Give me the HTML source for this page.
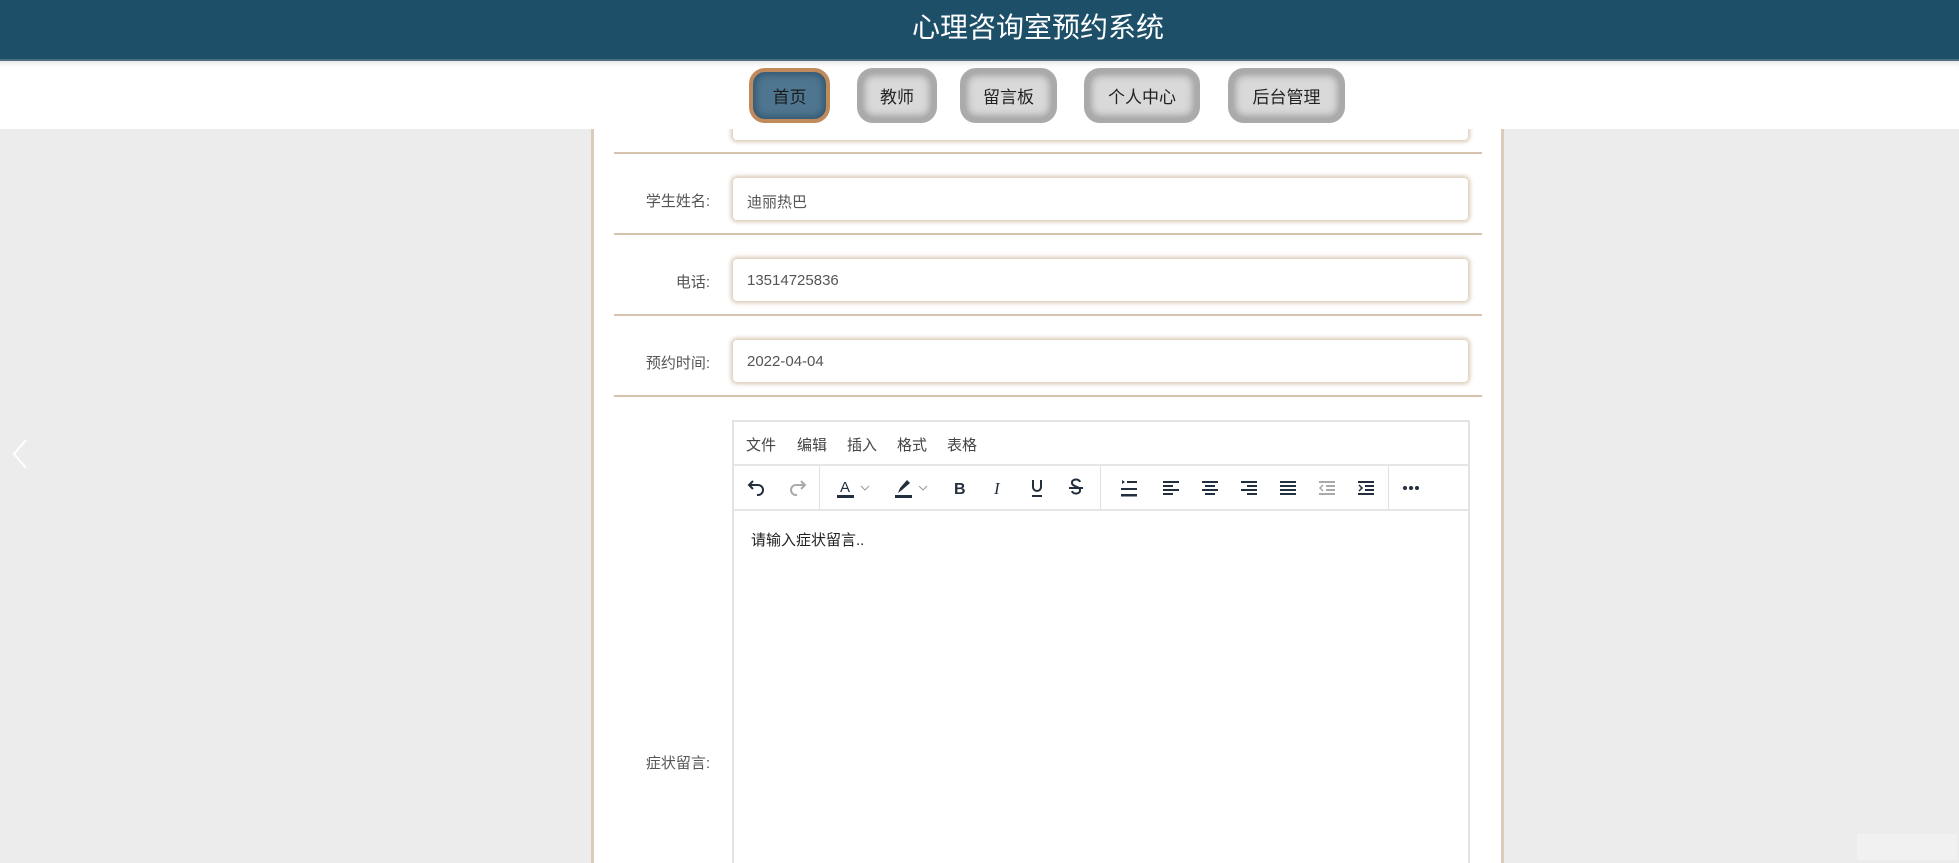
<!DOCTYPE html>
<html><head><meta charset="utf-8"><style>
*{margin:0;padding:0;box-sizing:border-box}
body{width:1959px;height:863px;overflow:hidden;background:#ececec;font-family:"Liberation Sans","Noto Sans CJK SC",sans-serif;position:relative}
.hdr{position:absolute;left:0;top:0;width:1959px;height:61px;background:#1e4f69;border-bottom:2px solid #4c6f82;z-index:3}
.hdr h1{position:absolute;left:912px;top:6px;font-size:28px;font-weight:normal;color:#fff}
.nav{position:absolute;left:0;top:61px;width:1959px;height:68px;background:#fff;box-shadow:inset 0 6px 6px -4px rgba(0,0,0,.12);z-index:2}
.btn{position:absolute;top:7px;height:55px;border-radius:16px;border:4px solid #aaa;background:#d9d9d9;box-shadow:inset 0 0 8px 3px #9b9b9b;font-size:17px;color:#222;display:flex;align-items:center;justify-content:center}
.btn.on{border-color:#c08a5c;background:#4f7690;box-shadow:inset 0 0 8px 2px #2e5168;color:#1b1b1b}
.panel{position:absolute;left:591px;top:129px;width:913px;height:734px;background:#fff;border-left:3px solid #dccbb9;border-right:3px solid #dccbb9;overflow:hidden;z-index:1}
.line{position:absolute;left:20px;width:868px;height:2px;background:#d5c3ad}
.inp{position:absolute;left:138px;width:737px;height:44px;border:1px solid #e4d6c6;border-radius:5px;box-shadow:0 0 4px 1px #d8c6b2;font-size:15px;color:#555;padding:13px 0 0 14px}
.lab{position:absolute;width:116px;left:0;text-align:right;font-size:15px;color:#555}
.ed{position:absolute;left:138px;top:291px;width:738px;height:460px;border:2px solid #e3e3e3}
.menu{height:44px;border-bottom:2px solid #e6e6e6;font-size:15px;color:#444;position:relative}
.menu span{position:absolute;top:12px}
.tb{height:45px;border-bottom:2px solid #e6e6e6;position:relative}
.dv{position:absolute;top:0;width:1px;height:43px;background:#e0e0e0}
.ic{position:absolute;top:10px}
</style></head><body>
<div class="hdr"><h1>心理咨询室预约系统</h1></div>
<div class="nav">
<div class="btn on" style="left:749px;width:81px">首页</div>
<div class="btn" style="left:857px;width:80px">教师</div>
<div class="btn" style="left:960px;width:97px">留言板</div>
<div class="btn" style="left:1084px;width:116px">个人中心</div>
<div class="btn" style="left:1228px;width:117px">后台管理</div>
</div>
<div class="panel">
<div class="inp" style="top:-30px;height:42px"></div>
<div class="line" style="top:23px"></div>
<div class="lab" style="top:61px">学生姓名:</div>
<div class="inp" style="top:48px">迪丽热巴</div>
<div class="line" style="top:104px"></div>
<div class="lab" style="top:142px">电话:</div>
<div class="inp" style="top:129px">13514725836</div>
<div class="line" style="top:185px"></div>
<div class="lab" style="top:223px">预约时间:</div>
<div class="inp" style="top:210px">2022-04-04</div>
<div class="line" style="top:266px"></div>
<div class="lab" style="top:623px">症状留言:</div>
<div class="ed">
<div class="menu"><span style="left:12px">文件</span><span style="left:63px">编辑</span><span style="left:113px">插入</span><span style="left:163px">格式</span><span style="left:213px">表格</span></div>
<div class="tb">
<div class="dv" style="left:85px"></div><div class="dv" style="left:366px"></div><div class="dv" style="left:654px"></div>
<svg class="ic" style="left:11px" width="24" height="24" viewBox="0 0 24 24" fill="none" stroke="#222f3e" stroke-width="2"><path d="M8 5L4 9l4 4M4 9h9a5 5 0 0 1 0 10h-1"/></svg>
<svg class="ic" style="left:51px" width="24" height="24" viewBox="0 0 24 24" fill="none" stroke="#aaa" stroke-width="2"><path d="M16 5l4 4-4 4M20 9h-9a5 5 0 0 0 0 10h1"/></svg>
<svg class="ic" style="left:100px" width="24" height="24" viewBox="0 0 24 24"><text x="6" y="16" font-size="15" font-family="Liberation Sans" fill="#222f3e">A</text><rect x="3" y="19" width="17" height="3" fill="#222f3e"/></svg>
<svg class="ic" style="left:124px" width="14" height="24" viewBox="0 0 14 24" fill="none" stroke="#999"><path d="M3 10l4 4 4-4"/></svg>
<svg class="ic" style="left:158px" width="24" height="24" viewBox="0 0 24 24"><path d="M6 17l2-5 7-8 3 3-8 7z" fill="#222f3e"/><rect x="3" y="19" width="17" height="3" fill="#222f3e"/></svg>
<svg class="ic" style="left:182px" width="14" height="24" viewBox="0 0 14 24" fill="none" stroke="#999"><path d="M3 10l4 4 4-4"/></svg>
<svg class="ic" style="left:214px" width="24" height="24" viewBox="0 0 24 24"><text x="6" y="18" font-size="16" font-weight="bold" font-family="Liberation Sans" fill="#222f3e">B</text></svg>
<svg class="ic" style="left:253px" width="24" height="24" viewBox="0 0 24 24"><text x="7" y="18" font-size="17" font-style="italic" font-family="Liberation Serif" fill="#222f3e">I</text></svg>
<svg class="ic" style="left:291px" width="24" height="24" viewBox="0 0 24 24" fill="none" stroke="#222f3e" stroke-width="2"><path d="M8 4v7a4 4 0 0 0 8 0V4M7 20h10"/></svg>
<svg class="ic" style="left:330px" width="24" height="24" viewBox="0 0 24 24" fill="none" stroke="#222f3e" stroke-width="2"><path d="M16 6a4 3 0 0 0-8 1c0 4 8 3 8 7a4 3 0 0 1-8 1M5 12h14"/></svg>
<svg class="ic" style="left:383px" width="24" height="24" viewBox="0 0 24 24" fill="#222f3e"><path d="M5 4l3 2-3 2z"/><rect x="10" y="5" width="10" height="2"/><rect x="4" y="12" width="16" height="2"/><rect x="4" y="18" width="16" height="2.5"/></svg>
<svg class="ic" style="left:425px" width="24" height="24" viewBox="0 0 24 24" fill="#222f3e"><rect x="4" y="5" width="16" height="2"/><rect x="4" y="9" width="10" height="2"/><rect x="4" y="13" width="16" height="2"/><rect x="4" y="17" width="10" height="2"/></svg>
<svg class="ic" style="left:464px" width="24" height="24" viewBox="0 0 24 24" fill="#222f3e"><rect x="4" y="5" width="16" height="2"/><rect x="7" y="9" width="10" height="2"/><rect x="4" y="13" width="16" height="2"/><rect x="7" y="17" width="10" height="2"/></svg>
<svg class="ic" style="left:503px" width="24" height="24" viewBox="0 0 24 24" fill="#222f3e"><rect x="4" y="5" width="16" height="2"/><rect x="10" y="9" width="10" height="2"/><rect x="4" y="13" width="16" height="2"/><rect x="10" y="17" width="10" height="2"/></svg>
<svg class="ic" style="left:542px" width="24" height="24" viewBox="0 0 24 24" fill="#222f3e"><rect x="4" y="5" width="16" height="2"/><rect x="4" y="9" width="16" height="2"/><rect x="4" y="13" width="16" height="2"/><rect x="4" y="17" width="16" height="2"/></svg>
<svg class="ic" style="left:581px" width="24" height="24" viewBox="0 0 24 24" fill="#aaa"><rect x="4" y="5" width="16" height="2"/><rect x="11" y="9" width="9" height="2"/><rect x="11" y="13" width="9" height="2"/><rect x="4" y="17" width="16" height="2"/><path d="M8 9l-3 3 3 3" fill="none" stroke="#aaa" stroke-width="1.5"/></svg>
<svg class="ic" style="left:620px" width="24" height="24" viewBox="0 0 24 24" fill="#222f3e"><rect x="4" y="5" width="16" height="2"/><rect x="11" y="9" width="9" height="2"/><rect x="11" y="13" width="9" height="2"/><rect x="4" y="17" width="16" height="2"/><path d="M5 9l3 3-3 3" fill="none" stroke="#222f3e" stroke-width="1.5"/></svg>
<svg class="ic" style="left:665px" width="24" height="24" viewBox="0 0 24 24" fill="#222f3e"><circle cx="6" cy="12" r="2"/><circle cx="12" cy="12" r="2"/><circle cx="18" cy="12" r="2"/></svg>
</div>
<div style="padding:18px 0 0 17px;font-size:15px;color:#222">请输入症状留言..</div>
</div>
</div>
<svg style="position:absolute;left:10px;top:438px" width="20" height="32" viewBox="0 0 20 32" fill="none" stroke="#fff" stroke-width="2"><path d="M16 2L4 16l12 14"/></svg>
<div style="position:absolute;left:1857px;top:834px;width:100px;height:26px;background:#f1f1f1"></div>
</body></html>
